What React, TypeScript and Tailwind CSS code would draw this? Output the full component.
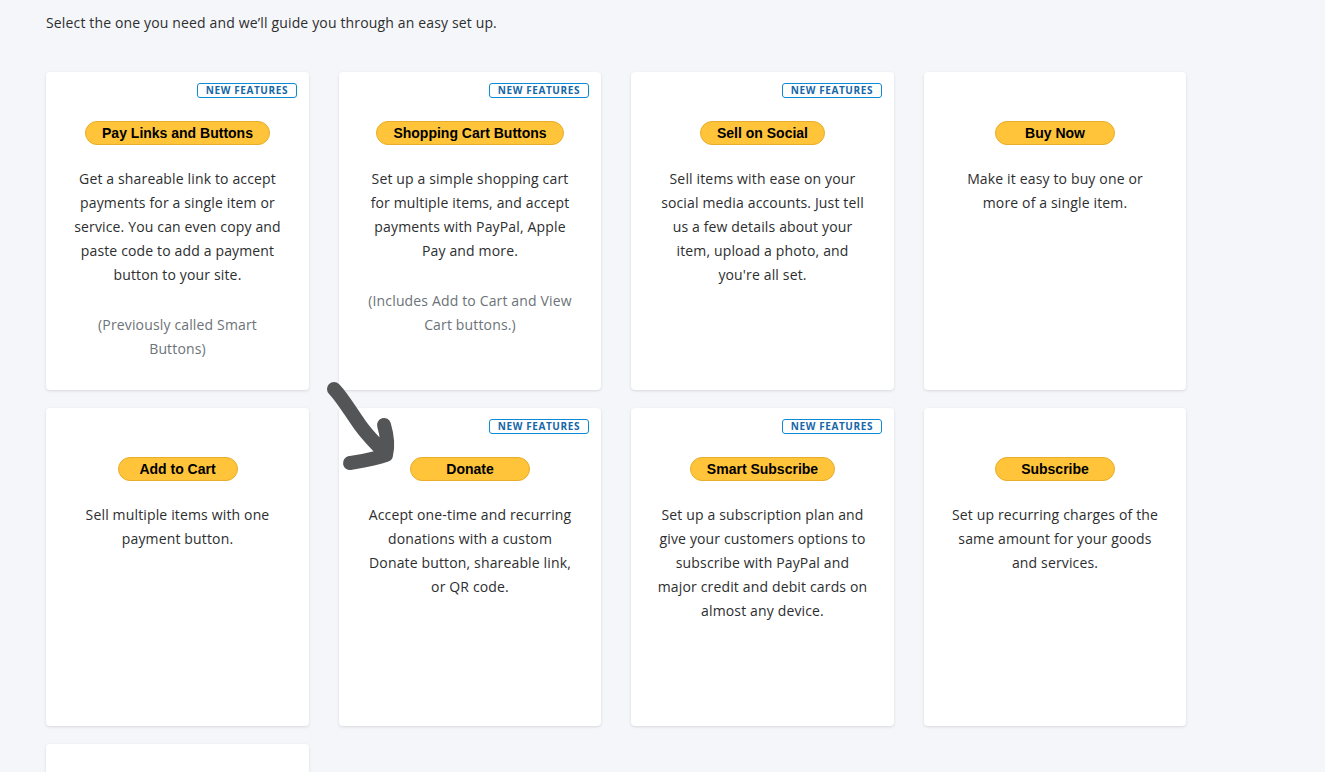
import React from 'react';

type ButtonOption = {
    label: string;
    isNew?: boolean;
    body: string;
    note?: string;
};

const options: ButtonOption[] = [
    {
        label: 'Pay Links and Buttons',
        isNew: true,
        body: 'Get a shareable link to accept payments for a single item or service. You can even copy and paste code to add a payment button to your site.',
        note: '(Previously called Smart Buttons)',
    },
    {
        label: 'Shopping Cart Buttons',
        isNew: true,
        body: 'Set up a simple shopping cart for multiple items, and accept payments with PayPal, Apple Pay and more.',
        note: '(Includes Add to Cart and View Cart buttons.)',
    },
    {
        label: 'Sell on Social',
        isNew: true,
        body: "Sell items with ease on your social media accounts. Just tell us a few details about your item, upload a photo, and you're all set.",
    },
    {
        label: 'Buy Now',
        body: 'Make it easy to buy one or more of a single item.',
    },
    {
        label: 'Add to Cart',
        body: 'Sell multiple items with one payment button.',
    },
    {
        label: 'Donate',
        isNew: true,
        body: 'Accept one-time and recurring donations with a custom Donate button, shareable link, or QR code.',
    },
    {
        label: 'Smart Subscribe',
        isNew: true,
        body: 'Set up a subscription plan and give your customers options to subscribe with PayPal and major credit and debit cards on almost any device.',
    },
    {
        label: 'Subscribe',
        body: 'Set up recurring charges of the same amount for your goods and services.',
    },
    {
        label: '',
        body: '',
    },
];

function OptionCard({ option }: { option: ButtonOption }) {
    return (
        <div className="relative h-[318px] rounded-[4px] bg-white shadow-[0_1px_3px_rgba(0,0,0,0.12)]">
            {option.isNew && (
                <span className="absolute right-[12px] top-[11px] rounded-[3px] border border-[#0d8ad6] px-[8px] text-[10px] font-bold leading-[13px] tracking-[0.6px] text-[#1567a8] [font-family:'Open_Sans',sans-serif]">
                    NEW FEATURES
                </span>
            )}
            {option.label && (
                <div className="flex flex-col items-center px-[26px] pt-[49px]">
                    <span className="flex h-[24px] min-w-[120px] items-center justify-center rounded-full border border-[#e8ad2b] bg-[#ffc439] px-[16px] text-[14px] font-bold text-black [font-family:'Liberation_Sans',Arial,sans-serif]">
                        {option.label}
                    </span>
                    <p className="mt-[22px] text-center text-[14px] leading-[24px] tracking-[0.15px] text-[#2c2e2f]">
                        {option.body}
                    </p>
                    {option.note && (
                        <p className="mt-[26px] text-center text-[14px] leading-[24px] tracking-[0.15px] text-[#6c7378]">
                            {option.note}
                        </p>
                    )}
                </div>
            )}
        </div>
    );
}

export default function App() {
    return (
        <div className="relative min-h-[772px] bg-[#f5f6fa] px-[46px] pt-[11px] [font-family:'Open_Sans','Noto_Sans',sans-serif]">
            <p className="text-[14px] leading-[24px] tracking-[0.15px] text-[#2c2e2f]">
                Select the one you need and we’ll guide you through an easy set up.
            </p>
            <div className="mt-[37px] grid w-[1140px] grid-cols-[263px_262px_263px_262px] gap-x-[30px] gap-y-[18px]">
                {options.map((option, i) => (
                    <OptionCard key={i} option={option} />
                ))}
            </div>
            {/* hand-drawn pointer over the Donate card */}
            <svg
                className="pointer-events-none absolute left-[320px] top-[375px]"
                width="90"
                height="100"
                viewBox="0 0 90 100"
                fill="none"
            >
                <path
                    d="M14 14 C 22 22, 30 36, 40 50 C 50 64, 60 72, 66 80 M 64 50 C 67 60, 68 72, 66 80 C 55 84, 42 86, 30 88"
                    stroke="#545557"
                    strokeWidth="14"
                    strokeLinecap="round"
                    strokeLinejoin="round"
                />
            </svg>
        </div>
    );
}
